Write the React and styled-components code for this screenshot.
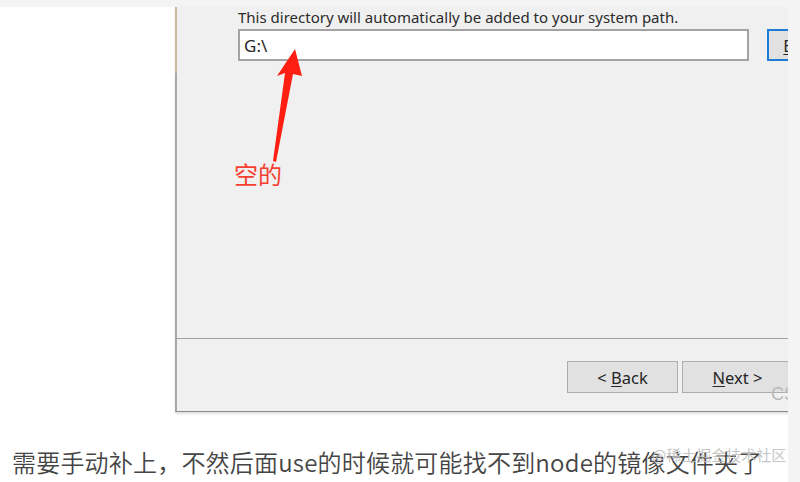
import React from "react";
import styled, { createGlobalStyle } from "styled-components";

const Global = createGlobalStyle`
  html, body {
    margin: 0;
    padding: 0;
    background: #f4f4f4;
  }
`;

const Page = styled.div`
  width: 800px;
  height: 482px;
  padding-top: 7px;
  box-sizing: border-box;
  overflow: hidden;
`;

const Article = styled.div`
  position: relative;
  width: 788px;
  height: 475px;
  background: #fff;
  overflow: hidden;
  padding-left: 12px;
  box-sizing: border-box;
`;

const Figure = styled.div`
  position: relative;
  margin-left: 163px;
  height: 406px;
`;

const Dialog = styled.div`
  position: relative;
  width: 760px;
  height: 404px;
  background: #f0f0f0;
  border-left: 2px solid #a8a8a8;
  border-bottom: 1px solid #8c8c8c;
  box-shadow: 0 2px 2px rgba(0, 0, 0, 0.12);
  display: flex;
  flex-direction: column;
  font-family: "Noto Sans", "Open Sans", sans-serif;
  color: #262626;

  &::before {
    content: "";
    position: absolute;
    left: -2px;
    top: 0;
    width: 2px;
    height: 66px;
    background: #cdb8a2;
  }
`;

const Content = styled.div`
  height: 332px;
  padding: 0 0 0 61px;
  box-sizing: border-box;
  border-bottom: 1px solid #a0a0a0;
`;

const Label = styled.div`
  font-size: 15px;
  line-height: 20px;
  color: #2b2b2b;
`;

const PathRow = styled.div`
  display: flex;
  gap: 18px;
  margin-top: 2px;
`;

const PathInput = styled.div`
  width: 511px;
  height: 32px;
  box-sizing: border-box;
  border: 2px solid #a3a3a3;
  background: #fff;
  display: flex;
  align-items: center;
  padding-left: 4px;
  font-size: 17px;
`;

const WinButton = styled.div`
  width: ${(p) => p.$w || 111}px;
  height: 32px;
  box-sizing: border-box;
  border: ${(p) => (p.$focus ? "2px solid #1d7bd6" : "1.5px solid #adadad")};
  background: #e1e1e1;
  display: flex;
  align-items: center;
  justify-content: center;
  font-size: 16.5px;
  color: #262626;
  flex-shrink: 0;

  u {
    text-underline-offset: 2px;
    text-decoration-thickness: 1px;
  }
`;

const Footer = styled.div`
  flex: 1;
  display: flex;
  align-items: flex-start;
  padding: 22px 0 0 390px;
  gap: 4px;
`;

const Arrow = styled.svg`
  position: absolute;
  left: 92px;
  top: 40px;
`;

const Note = styled.div`
  position: absolute;
  left: 59px;
  top: 151px;
  font-family: "Noto Sans CJK SC", sans-serif;
  font-size: 24px;
  line-height: 32px;
  color: #f5402f;
`;

const CornerMark = styled.div`
  position: absolute;
  left: 596px;
  top: 377px;
  font-family: "Liberation Sans", Arial, sans-serif;
  font-size: 18px;
  color: #b9b9b9;
`;

const Paragraph = styled.p`
  margin: 31px 0 0;
  font-family: "Noto Sans CJK SC", sans-serif;
  font-size: 24px;
  font-weight: 350;
  line-height: 36px;
  letter-spacing: 0.2px;
  color: #454545;
  white-space: nowrap;
`;

const Watermark = styled.div`
  position: absolute;
  left: 652px;
  top: 439px;
  font-family: "Noto Sans CJK SC", sans-serif;
  font-size: 15px;
  line-height: 18px;
  color: rgba(190, 190, 190, 0.9);
`;

export default function App() {
  return (
    <>
      <Global />
      <Page>
        <Article>
          <Figure>
            <Dialog>
              <Content>
                <Label>This directory will automatically be added to your system path.</Label>
                <PathRow>
                  <PathInput>G:\</PathInput>
                  <WinButton $w={103} $focus>
                    <u>B</u>rowse...
                  </WinButton>
                </PathRow>
              </Content>
              <Footer>
                <WinButton>
                  &lt;&nbsp;<u>B</u>ack
                </WinButton>
                <WinButton>
                  <u>N</u>ext &gt;
                </WinButton>
                <WinButton>Cancel</WinButton>
              </Footer>
            </Dialog>
            <Arrow width="40" height="120" viewBox="0 0 40 120">
              <polygon
                points="28,2 35,29 26,27 9,115 6,114 18,26 10,29"
                fill="#ff1f12"
              />
            </Arrow>
            <Note>空的</Note>
            <CornerMark>CS</CornerMark>
          </Figure>
          <Paragraph>需要手动补上，不然后面use的时候就可能找不到node的镜像文件夹了</Paragraph>
          <Watermark>@稀土掘金技术社区</Watermark>
        </Article>
      </Page>
    </>
  );
}
